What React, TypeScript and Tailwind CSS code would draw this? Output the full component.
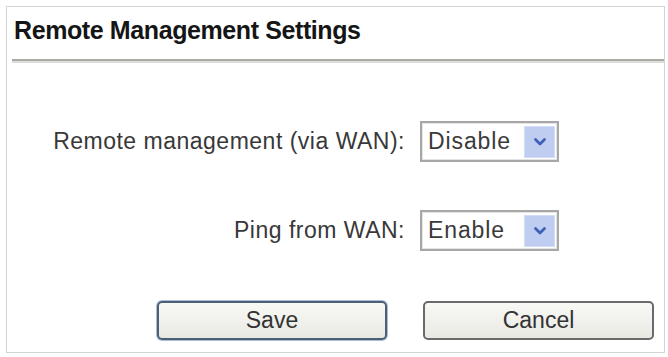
import React from "react";

function Chevron() {
  return (
    <svg width="14" height="10" viewBox="0 0 14 10">
      <path d="M2.5 2.5 L7 7 L11.5 2.5" fill="none" stroke="#3f60b8" strokeWidth="2.8" strokeLinecap="round" strokeLinejoin="round" />
    </svg>
  );
}

function Select({ value }: { value: string }) {
  return (
    <div className="flex h-[41px] w-[139px] items-center border-2 border-[#a7a7a7] bg-white pl-[6px] pr-[2px] shadow-[inset_0_0_0_1px_#e4e4e4]">
      <span className="flex-1 text-[23px] tracking-[0.9px] text-[#3a3a3a] leading-none">{value}</span>
      <div className="flex h-[32px] w-[31px] items-center justify-center bg-[#bfcdf0] border border-[#d3ddf6]">
        <Chevron />
      </div>
    </div>
  );
}

export default function App() {
  return (
    <div className="h-[357px] w-[668px] bg-white pl-[6px] pt-[6px]" style={{ fontFamily: '"Liberation Sans", Arial, sans-serif' }}>
      <div className="flex h-[347px] w-[659px] flex-col border border-[#d3d3d3] bg-white">
        <div className="pl-[7px] pt-[9px] text-[25px] font-bold leading-[28px] tracking-[-0.4px] text-[#151515]">
          Remote Management Settings
        </div>
        <div className="ml-[5px] mt-[15px] h-[4px] border-t-[2px] border-[#a9aaa4] border-b-[2px] border-b-[#dcdcd8]" />
        <div className="mt-[58px] flex items-center">
          <div className="w-[398px] text-right text-[23px] tracking-[0.5px] text-[#383838] leading-none">Remote management (via WAN):</div>
          <div className="ml-[15px]">
            <Select value="Disable" />
          </div>
        </div>
        <div className="mt-[48px] flex items-center">
          <div className="w-[398px] text-right text-[23px] tracking-[0.5px] text-[#383838] leading-none">Ping from WAN:</div>
          <div className="ml-[15px]">
            <Select value="Enable" />
          </div>
        </div>
        <div className="mt-[50px] flex pl-[150px] gap-[36px]">
          <button className="flex h-[39px] w-[230px] items-center justify-center rounded-[5px] border-2 border-[#4d5e75] bg-gradient-to-b from-[#f8f8f5] to-[#e9e9e4] text-[23px] leading-none text-[#333] shadow-[0_0_0_1px_#a9bdd8]">
            Save
          </button>
          <button className="flex h-[39px] w-[231px] items-center justify-center rounded-[5px] border-2 border-[#6a6a6a] bg-gradient-to-b from-[#f8f8f5] to-[#e9e9e4] text-[23px] leading-none text-[#333]">
            Cancel
          </button>
        </div>
      </div>
    </div>
  );
}
